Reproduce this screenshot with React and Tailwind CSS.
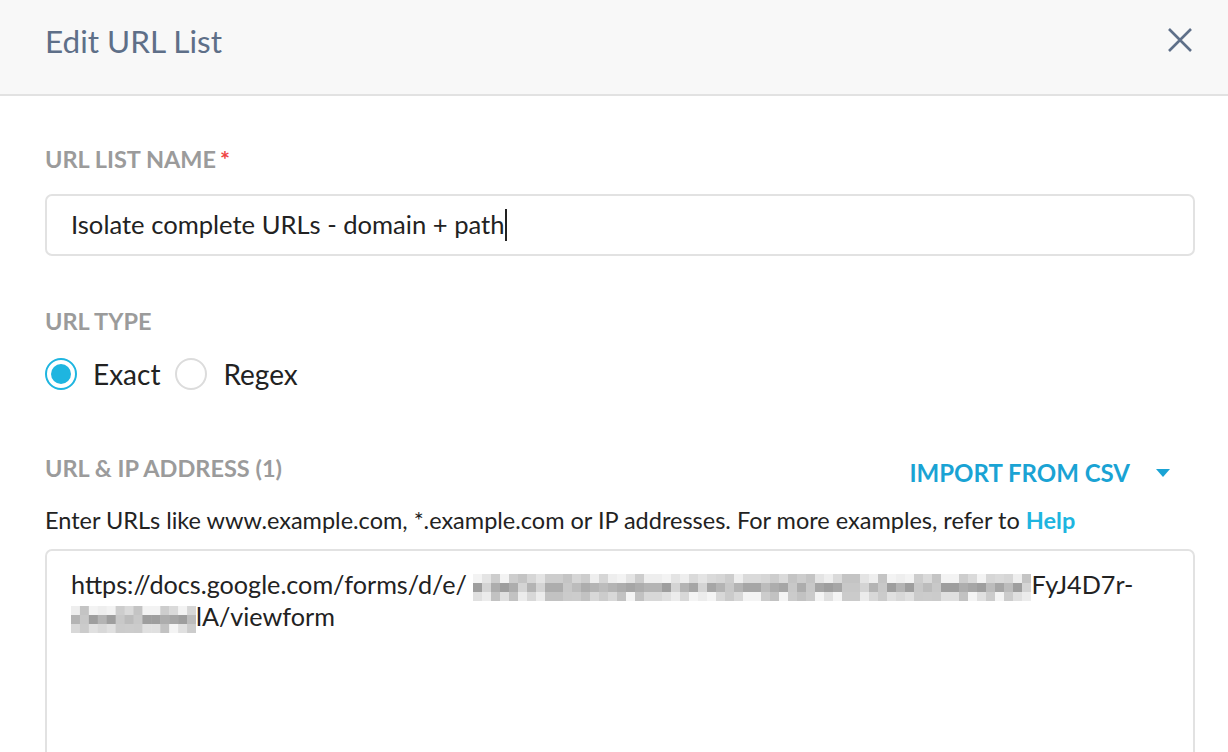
const TOP = ["#d6d6d6", "#e4e4e4", "#cdcdcd", "#eeeeee", "#dadada", "#c4c4c4", "#f3f3f3"];
const MID = ["#b4b4b4", "#a6a6a6", "#c8c8c8", "#9e9e9e", "#bcbcbc", "#d4d4d4", "#adadad"];
const BOT = ["#e0e0e0", "#cccccc", "#ececec", "#c2c2c2", "#d8d8d8", "#f4f4f4", "#cbcbcb"];

// deterministic shade pick so the mosaic looks random but stays stable
function pick(list, x, y, seed) {
  const n = (x * 37 + y * 101 + seed * 13 + ((x * x * 7 + y) % 11)) % list.length;
  return list[n];
}

function Mosaic({ cols, width, seed, palettes }) {
  const cw = width / cols;
  return (
    <svg width={width} height={27} className="inline-block align-[-7px]">
      {palettes.map((pal, y) =>
        Array.from({ length: cols }).map((_, x) => (
          <rect key={y + "-" + x} x={x * cw} y={y * 9} width={cw + 0.5} height={9.3} fill={pick(pal, x, y, seed)} />
        ))
      )}
    </svg>
  );
}

function Label({ children, required }) {
  return (
    <div className="text-[23.5px] font-bold text-[#9b9b9b] leading-none">
      {children}
      {required && <span className="text-[#ef4444] ml-1">*</span>}
    </div>
  );
}

function Radio({ checked, label }) {
  return (
    <label className="flex items-center gap-[16px]">
      <span
        className={
          "w-[32px] h-[32px] rounded-full border-2 flex items-center justify-center bg-white " +
          (checked ? "border-[#1eb5e0]" : "border-[#dcdcdc]")
        }
      >
        {checked && <span className="w-[20px] h-[20px] rounded-full bg-[#1eb5e0]" />}
      </span>
      <span className="text-[28px] text-[#222]">{label}</span>
    </label>
  );
}

export default function App() {
  return (
    <div className="w-[1228px] h-[752px] overflow-hidden bg-white" style={{ fontFamily: "Lato, 'Noto Sans', sans-serif" }}>
      <div className="h-[96px] bg-[#f8f8f8] border-b-2 border-[#e2e2e2] flex items-center justify-between pl-[45px] pr-[36px]">
        <h2 className="text-[31.5px] text-[#5e6f88] -mt-[10px]">Edit URL List</h2>
        <svg width="24" height="24" viewBox="0 0 24 24" className="-mt-[15px]">
          <path d="M1 1L23 23M23 1L1 23" stroke="#5e6f88" strokeWidth="2.6" />
        </svg>
      </div>

      <div className="px-[45px] pr-[33px]">
        <div className="pt-[52px]">
          <Label required>URL LIST NAME</Label>
          <div className="mt-[22px] h-[62px] rounded-[7px] border-2 border-[#e2e2e2] flex items-center pl-[24px]">
            <span className="text-[25.6px] text-[#222]">Isolate complete URLs - domain + path</span>
            <span className="w-[2px] h-[32px] bg-[#222]" />
          </div>
        </div>

        <div className="pt-[54px]">
          <Label>URL TYPE</Label>
          <div className="mt-[20px] flex items-center gap-[15px]">
            <Radio checked label="Exact" />
            <Radio label="Regex" />
          </div>
        </div>

        <div className="pt-[52px]">
          <div className="flex items-center justify-between">
            <Label>URL &amp; IP ADDRESS (1)</Label>
            <div className="flex items-center gap-[26px] mt-[8px] pr-[25px]">
              <span className="text-[24px] font-bold text-[#1aa3d4]">IMPORT FROM CSV</span>
              <svg width="14" height="8" viewBox="0 0 14 8">
                <path d="M0 0h14L7 8z" fill="#1aa3d4" />
              </svg>
            </div>
          </div>
          <p className="mt-[14px] text-[23.5px] leading-[30px] text-[#222]">
            Enter URLs like www.example.com, *.example.com or IP addresses. For more examples, refer to{" "}
            <span className="text-[#1eb5e0] font-bold">Help</span>
          </p>
          <div className="mt-[14px] h-[260px] rounded-[7px] border-2 border-[#e2e2e2] pl-[24px] pt-[18px] text-[25.2px] text-[#222] leading-[31px]">
            <div className="whitespace-nowrap">
              https://docs.google.com/forms/d/e/{" "}
              <Mosaic cols={62} width={558} seed={1} palettes={[TOP, MID, BOT]} />
              FyJ4D7r-
            </div>
            <div className="whitespace-nowrap">
              <Mosaic cols={14} width={125} seed={4} palettes={[TOP, MID, BOT]} />
              lA/viewform
            </div>
          </div>
        </div>
      </div>
    </div>
  );
}
